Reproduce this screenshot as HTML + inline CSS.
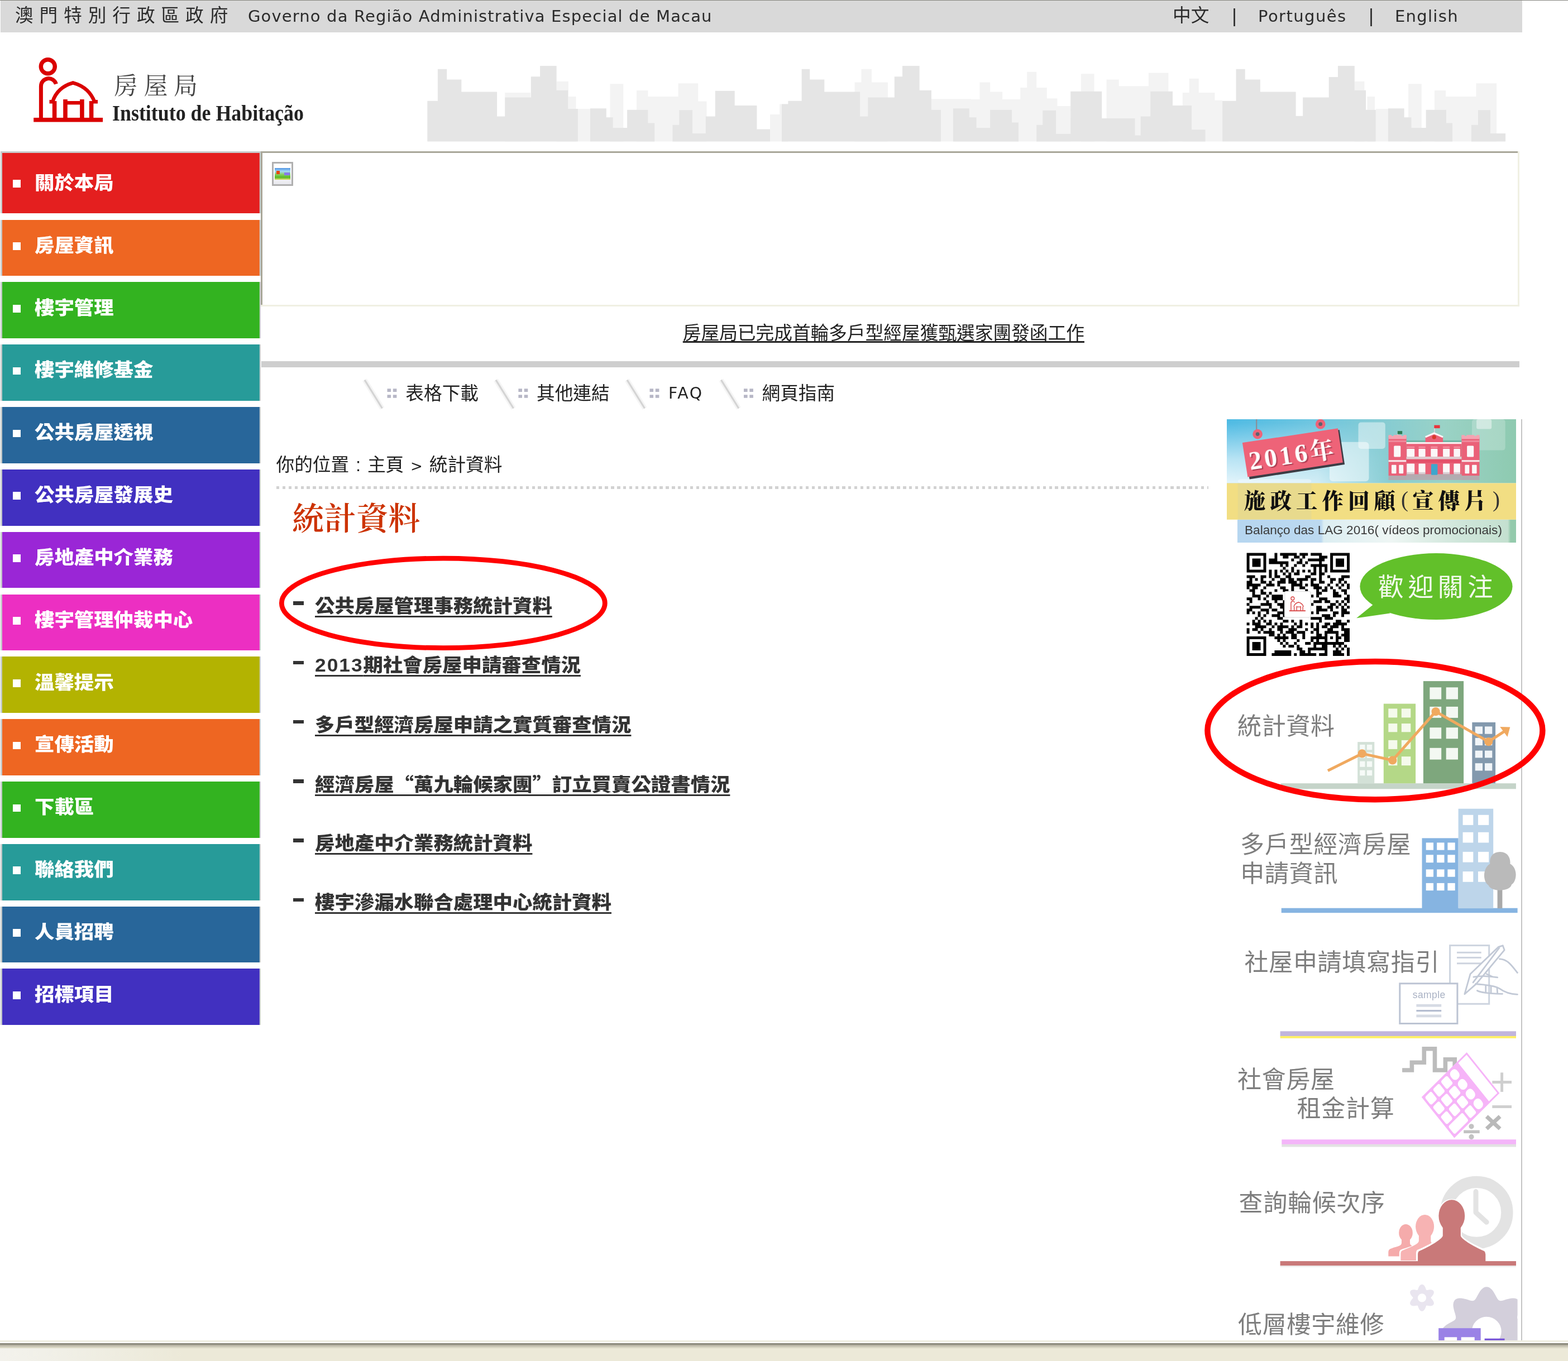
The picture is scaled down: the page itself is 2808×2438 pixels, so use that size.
<!DOCTYPE html>
<html lang="zh-Hant">
<head>
<meta charset="utf-8">
<title>房屋局 - 統計資料</title>
<style>
html,body{margin:0;padding:0;background:#fff;}
body{width:2808px;height:2438px;position:relative;overflow:hidden;
  font-family:"Liberation Sans","Noto Sans CJK TC",sans-serif;color:#333;}
.abs{position:absolute;white-space:nowrap;}
.tb,.mi span,#banner div{will-change:transform;}
.zh{font-family:"Liberation Sans","Noto Sans CJK TC",sans-serif;}
.vd{font-family:"DejaVu Sans","Noto Sans CJK TC",sans-serif;}
.ming{font-family:"Liberation Serif","Noto Serif CJK SC",serif;}
a{color:inherit;}
/* top bar */
#topline{left:0;top:0;width:2808px;height:1.4px;background:#85857e;}
#topbar{left:1.2px;top:1.2px;width:2724.6px;height:56.4px;background:#d9d9d9;}
.tb{top:8px;height:40px;line-height:40px;font-size:32.7px;color:#2b2b2b;}
.tl{font-size:29px;letter-spacing:1.14px;top:8.6px;}
/* sidebar */
#side{left:1.2px;top:271.1px;width:466.2px;}
.mi{position:absolute;left:0;width:466.1px;height:100.8px;background:linear-gradient(var(--c),var(--c)) 2.7px 0/460.8px 100% no-repeat,linear-gradient(90deg,#c6cbcb 0,#c6cbcb 50%,#cdd2d2 50%,#cdd2d2 100%);}
.mi i{position:absolute;left:21.6px;top:40.6px;width:13.8px;height:13.6px;background:#fff;}
.mi span{position:absolute;left:60.9px;top:20.2px;height:52px;line-height:52px;font-size:32.7px;font-weight:900;color:#fff;white-space:nowrap;transform:scaleX(1.083);transform-origin:0 50%;
  font-family:"Liberation Sans","Noto Sans CJK TC",sans-serif;}
/* content */
#box{left:467.3px;top:271.1px;width:2253.3px;height:277.8px;background:#fff;}
#box b{position:absolute;display:block;}
#hr{left:467.5px;top:647.2px;width:2253.3px;height:10.6px;background:#cecece;}
.t12{font-size:32.7px;line-height:40px;height:40px;color:#222;}
.lnk{text-decoration:underline;text-decoration-thickness:2.7px;text-underline-offset:3px;}
.li{left:563.8px;font-size:32.7px;font-weight:900;transform:scaleX(1.083);transform-origin:0 50%;line-height:44px;height:44px;color:#333;
  text-decoration:underline;text-decoration-thickness:2.7px;text-underline-offset:5.6px;text-decoration-skip-ink:none;}
.dash{left:524.7px;width:19.6px;height:6.4px;margin-top:-0.4px;background:#333;}
.rt{font-family:"Liberation Sans","Noto Sans CJK TC",sans-serif;color:#7e7e7e;font-size:43px;line-height:52px;letter-spacing:0.7px;margin-left:-0.8px;}
#vline{left:2723.6px;top:750.8px;width:2.6px;height:1650px;background:#c4c4c4;}
#status{left:0;top:2400.8px;width:2808px;height:37.2px;background:#ece9d8;}
</style>
</head>
<body>
<div id="wrap" style="position:absolute;left:0;top:0;width:2808px;height:2438px;opacity:0.9999;">
<div class="abs" id="topbar"></div>
<div class="abs" id="topline"></div>
<div class="abs tb zh" style="left:27px;letter-spacing:10.9px;">澳門特別行政區政府</div>
<div class="abs tb vd tl" style="left:444px;">Governo da Região Administrativa Especial de Macau</div>
<div class="abs tb vd" style="left:2099.5px;">中文</div>
<div class="abs tb vd" style="left:2205px;">|</div>
<div class="abs tb vd tl" style="left:2252.6px;letter-spacing:1.45px;">Português</div>
<div class="abs tb vd" style="left:2450px;">|</div>
<div class="abs tb vd tl" style="left:2497.5px;letter-spacing:1.3px;">English</div>

<!-- header / logo -->
<svg class="abs" id="sky" style="left:0;top:100px;" width="2808" height="160" viewBox="0 100 2808 160">
<path fill="#f3f3f3" d="M1092.5 253.6H1116.3V150.2H1092.5ZM1140.0 253.6H1160.4V162.1H1140.0ZM1160.4 253.6H1214.6V172.9H1160.4ZM1214.6 253.6H1250.2V149.2H1214.6ZM1250.2 253.6H1265.5V181.4H1250.2ZM1034.9 253.6H1056.9V195.0H1034.9ZM1379.1 253.6H1411.3V205.1H1379.1ZM1396.1 253.6H1411.3V186.5H1396.1ZM996.6 253.6H1017.9V145.8H996.6ZM904.3 253.6H950.1V166.1H904.3ZM1017.9 253.6H1031.5V172.9H1017.9ZM1172.2 253.6H1204.5V172.9H1172.2ZM1530.6 253.6H1589.9V147.5H1530.6ZM1542.4 253.6H1561.1V123.7H1542.4ZM1667.9 253.6H1739.1V177.3H1667.9ZM1754.4 253.6H1773.1V147.5H1754.4ZM1754.4 253.6H1795.1V164.4H1754.4ZM1739.1 253.6H1827.3V178.0H1739.1ZM1827.3 253.6H1874.8V157.0H1827.3ZM1839.2 253.6H1856.2V128.8H1839.2ZM1874.8 253.6H1893.5V176.3H1874.8ZM1893.5 253.6H1917.2V189.9H1893.5ZM1935.9 253.6H1959.6V132.2H1935.9ZM1981.6 253.6H2003.7V142.4H1981.6ZM1981.6 253.6H2059.6V154.3H1981.6ZM2057.9 253.6H2091.9V130.5H2057.9ZM1684.9 253.6H1706.9V196.7H1684.9ZM1823.9 253.6H1856.2V178.0H1823.9ZM2056.8 253.6H2092.4V130.5H2056.8ZM2117.8 253.6H2175.5V166.1H2117.8ZM2129.7 253.6H2146.7V140.7H2129.7ZM2158.5 253.6H2189.1V179.7H2158.5ZM2425.8 253.6H2443.4V145.8H2425.8ZM2448.5 253.6H2462.1V172.9H2448.5ZM2463.8 253.6H2485.8V195.0H2463.8ZM2522.1 253.6H2545.8V150.2H2522.1ZM2568.9 253.6H2589.2V162.1H2568.9ZM2589.2 253.6H2643.5V172.9H2589.2ZM2643.5 253.6H2680.1V149.2H2643.5ZM2601.1 253.6H2635.0V172.9H2601.1Z"/>
<path fill="#e5e5e5" d="M765.3 253.6H783.9V180.7H765.3ZM783.9 253.6H800.2V123.7H783.9ZM800.2 253.6H826.3V142.4H800.2ZM826.3 253.6H890.1V164.4H826.3ZM890.1 253.6H904.3V208.5H890.1ZM904.3 253.6H950.8V174.6H904.3ZM950.8 253.6H967.1V137.3H950.8ZM967.1 253.6H996.6V118.0H967.1ZM996.6 253.6H1017.2V161.7H996.6ZM1017.2 253.6H1034.9V195.0H1017.2ZM1056.9 253.6H1085.8V194.3H1056.9ZM1085.8 253.6H1097.6V210.2H1085.8ZM1097.6 253.6H1123.1V228.9H1097.6ZM1123.1 253.6H1160.4V196.7H1123.1ZM1160.4 253.6H1172.2V220.4H1160.4ZM1204.5 253.6H1216.3V223.8H1204.5ZM1216.3 253.6H1240.1V197.3H1216.3ZM1240.1 253.6H1263.8V239.1H1240.1ZM1263.8 253.6H1280.8V208.5H1263.8ZM1280.8 253.6H1315.7V162.7H1280.8ZM1315.7 253.6H1355.4V188.9H1315.7ZM1355.4 253.6H1379.1V231.6H1355.4ZM1411.3 253.6H1436.8V180.7H1411.3ZM1436.8 253.6H1450.0V123.7H1436.8ZM1400.0 253.6H1411.9V186.5H1400.0ZM1411.9 253.6H1435.6V180.7H1411.9ZM1435.6 253.6H1450.2V123.7H1435.6ZM1450.2 253.6H1476.3V142.4H1450.2ZM1476.3 253.6H1540.1V164.4H1476.3ZM1540.1 253.6H1554.3V208.5H1540.1ZM1554.3 253.6H1601.8V174.6H1554.3ZM1601.8 253.6H1616.0V137.3H1601.8ZM1616.0 253.6H1646.6V118.0H1616.0ZM1646.6 253.6H1667.9V161.7H1646.6ZM1667.9 253.6H1684.9V196.7H1667.9ZM1706.9 253.6H1735.8V194.3H1706.9ZM1735.8 253.6H1748.6V210.2H1735.8ZM1748.6 253.6H1773.1V228.9H1748.6ZM1773.1 253.6H1812.1V196.7H1773.1ZM1812.1 253.6H1823.9V219.4H1812.1ZM1856.2 253.6H1867.3V223.8H1856.2ZM1867.3 253.6H1891.1V197.7H1867.3ZM1891.1 253.6H1917.2V239.7H1891.1ZM1917.2 253.6H1973.2V163.8H1917.2ZM1973.2 253.6H2032.5V211.9H1973.2ZM2032.5 253.6H2042.7V242.4H2032.5ZM2042.7 253.6H2061.3V208.5H2042.7ZM2061.3 253.6H2100.0V163.8H2061.3ZM2050.0 253.6H2060.2V208.5H2050.0ZM2060.2 253.6H2094.1V163.8H2060.2ZM2094.1 253.6H2134.1V188.9H2094.1ZM2134.1 253.6H2158.5V232.3H2134.1ZM2189.1 253.6H2213.5V180.7H2189.1ZM2213.5 253.6H2229.7V123.7H2213.5ZM2229.7 253.6H2256.9V142.4H2229.7ZM2256.9 253.6H2320.6V164.4H2256.9ZM2320.6 253.6H2333.2V207.8H2320.6ZM2333.2 253.6H2379.7V174.6H2333.2ZM2379.7 253.6H2395.9V138.0H2379.7ZM2395.9 253.6H2425.8V118.0H2395.9ZM2425.8 253.6H2446.1V161.7H2425.8ZM2446.1 253.6H2463.8V196.7H2446.1ZM2485.8 253.6H2514.6V194.3H2485.8ZM2514.6 253.6H2527.5V210.2H2514.6ZM2527.5 253.6H2553.6V228.9H2527.5ZM2553.6 253.6H2589.9V196.7H2553.6ZM2589.9 253.6H2601.1V220.4H2589.9ZM2635.0 253.6H2646.9V223.8H2635.0ZM2646.9 253.6H2668.9V197.3H2646.9ZM2668.9 253.6H2696.1V239.1H2668.9Z"/>
</svg>
<svg class="abs" id="logo" style="left:40px;top:80px;" width="160" height="150" viewBox="40 80 160 150">
  <g fill="none" stroke="#da0000" stroke-width="6.6">
    <circle cx="85.8" cy="119.3" r="12.5" stroke-width="7.4"/>
    <path d="M73.4 212 V154.4 A13.8 13.8 0 0 1 100.4 150.4" stroke-width="7"/>
    <path d="M94.3 182 C99 167 109 154.5 130.7 148.3 C153 154.5 163 167 169.2 182" stroke-width="6.4"/>
    <path d="M88.5 182.2 H97 M166 182.2 H175" stroke-width="6.4"/>
    <path d="M97.6 181 V212 M163.6 181 V212" stroke-width="7.6"/>
    <path d="M117 178 V212 M146.9 178 V212" stroke-width="7.6"/>
    <path d="M117 184.2 H147" stroke-width="6.4"/>
  </g>
  <rect x="60.2" y="210.9" width="123.9" height="7.6" fill="#da0000"/>
</svg>
<div class="abs ming" style="left:204px;top:127.3px;font-size:43px;line-height:56px;letter-spacing:10.5px;color:#444;">房屋局</div>
<div class="abs" style="left:200.6px;top:178.6px;font-family:'Liberation Serif',serif;font-weight:700;font-size:40px;line-height:48px;color:#222;transform:scaleX(0.897);transform-origin:0 0;">Instituto de Habitação</div>

<!-- sidebar -->
<div class="abs" id="side">
  <div class="mi" style="top:0;height:110.8px;--c:#e41f1f;background:linear-gradient(var(--c),var(--c)) 2.7px 2.6px/460.8px 108.2px no-repeat,#c8cccc;"><i style="top:51.4px"></i><span style="top:31.4px">關於本局</span></div>
  <div class="mi" style="top:122.5px;--c:#ee6622;"><i></i><span>房屋資訊</span></div>
  <div class="mi" style="top:234.3px;--c:#33b320;"><i></i><span>樓宇管理</span></div>
  <div class="mi" style="top:346.1px;--c:#279b99;"><i></i><span>樓宇維修基金</span></div>
  <div class="mi" style="top:458.0px;--c:#28669a;"><i></i><span>公共房屋透視</span></div>
  <div class="mi" style="top:569.8px;--c:#4130c0;"><i></i><span>公共房屋發展史</span></div>
  <div class="mi" style="top:681.6px;--c:#9a26d6;"><i></i><span>房地產中介業務</span></div>
  <div class="mi" style="top:793.5px;--c:#ec2fc2;"><i></i><span>樓宇管理仲裁中心</span></div>
  <div class="mi" style="top:905.3px;--c:#b3b300;"><i></i><span>溫馨提示</span></div>
  <div class="mi" style="top:1017.1px;--c:#ee6622;"><i></i><span>宣傳活動</span></div>
  <div class="mi" style="top:1128.9px;--c:#33b320;"><i></i><span>下載區</span></div>
  <div class="mi" style="top:1240.8px;--c:#279b99;"><i></i><span>聯絡我們</span></div>
  <div class="mi" style="top:1352.6px;--c:#28669a;"><i></i><span>人員招聘</span></div>
  <div class="mi" style="top:1464.4px;--c:#4130c0;"><i></i><span>招標項目</span></div>
</div>

<!-- banner box -->
<div class="abs" id="box"><b style="left:0;bottom:0;width:100%;height:2.7px;background:#f0f0e3;"></b><b style="right:0;top:0;width:2.6px;height:100%;background:#f0f0e3;"></b><b style="left:0;top:0;width:2250.7px;height:2.6px;background:#a9a799;"></b><b style="left:0;top:0;width:2.6px;height:275.1px;background:#a9a799;"></b></div>
<div class="abs" id="broken" style="left:487.1px;top:290px;width:37.7px;height:43.1px;background:#b0b0b0;">
  <div style="position:absolute;left:2.7px;top:2.7px;right:2.7px;bottom:2.7px;background:linear-gradient(#fff 45%,#e8e8ee 100%);"></div>
  <div style="position:absolute;left:5.1px;top:10.9px;width:27.5px;height:21.5px;background:linear-gradient(#4f93e2 0%,#a6d9f9 28%,#86d060 55%,#58b822 80%,#e6df72 100%);"></div>
  <div style="position:absolute;left:8px;top:16px;width:6px;height:5.6px;background:#e8480e;"></div>
  <div style="position:absolute;left:21.6px;top:19px;width:10.6px;height:5px;background:#8878ee;"></div>
</div>
<div class="abs t12 zh lnk" style="left:1222.8px;top:577px;">房屋局已完成首輪多戶型經屋獲甄選家團發函工作</div>
<div class="abs" id="hr"></div>

<!-- nav -->
<div id="nav">
  <svg class="abs" style="left:630px;top:670px;" width="760" height="70" viewBox="630 670 760 70"><path d="M653.0 680.6L684.5 731.5" stroke="#f5f5f5" stroke-width="9" fill="none"/><path d="M653.0 680.6L684.5 731.5" stroke="#d4d4d4" stroke-width="3.2" fill="none"/><path d="M888.0 680.6L919.5 731.5" stroke="#f5f5f5" stroke-width="9" fill="none"/><path d="M888.0 680.6L919.5 731.5" stroke="#d4d4d4" stroke-width="3.2" fill="none"/><path d="M1123.0 680.6L1154.5 731.5" stroke="#f5f5f5" stroke-width="9" fill="none"/><path d="M1123.0 680.6L1154.5 731.5" stroke="#d4d4d4" stroke-width="3.2" fill="none"/><path d="M1291.4 680.6L1322.9 731.5" stroke="#f5f5f5" stroke-width="9" fill="none"/><path d="M1291.4 680.6L1322.9 731.5" stroke="#d4d4d4" stroke-width="3.2" fill="none"/><path fill="#b7b7c6" d="M693.5 696.3h6.6v5.6h-6.6zM693.5 707.2h6.6v5.6h-6.6zM703.8 696.3h6.6v5.6h-6.6zM703.8 707.2h6.6v5.6h-6.6zM928.4 696.3h6.6v5.6h-6.6zM928.4 707.2h6.6v5.6h-6.6zM938.7 696.3h6.6v5.6h-6.6zM938.7 707.2h6.6v5.6h-6.6zM1163.5 696.3h6.6v5.6h-6.6zM1163.5 707.2h6.6v5.6h-6.6zM1173.8 696.3h6.6v5.6h-6.6zM1173.8 707.2h6.6v5.6h-6.6zM1332.0 696.3h6.6v5.6h-6.6zM1332.0 707.2h6.6v5.6h-6.6zM1342.3 696.3h6.6v5.6h-6.6zM1342.3 707.2h6.6v5.6h-6.6z"/></svg>
  <div class="abs t12 zh" style="left:726.3px;top:684.5px;">表格下載</div>
  <div class="abs t12 zh" style="left:961px;top:684.5px;">其他連結</div>
  <div class="abs t12 vd" style="left:1197px;top:684.5px;font-size:28.4px;letter-spacing:2.6px;">FAQ</div>
  <div class="abs t12 zh" style="left:1364.5px;top:684.5px;">網頁指南</div>
</div>

<!-- breadcrumb / title -->
<div class="abs t12 zh" style="left:494.5px;top:812.5px;">你的位置<span style="display:inline-block;width:32.7px;text-align:center;">:</span>主頁<span style="display:inline-block;width:45.4px;text-align:center;font-size:26px;font-family:'DejaVu Sans',sans-serif;">&gt;</span>統計資料</div>
<div class="abs" id="dots" style="left:495px;top:871px;width:1669px;height:5.4px;background:repeating-linear-gradient(90deg,#d2d2d2 0,#d2d2d2 5.45px,transparent 5.45px,transparent 10.894px);"></div>
<div class="abs ming" style="left:523px;top:894px;font-size:57.2px;line-height:72px;color:#cc3300;letter-spacing:0.3px;font-weight:600;">統計資料</div>

<!-- list -->
<div class="abs dash" style="top:1077.8px;"></div><div class="abs li zh" style="top:1064px;">公共房屋管理事務統計資料</div>
<div class="abs dash" style="top:1184.1px;"></div><div class="abs li zh" style="top:1170.3px;"><span style="letter-spacing:1.8px;">2013</span>期社會房屋申請審查情況</div>
<div class="abs dash" style="top:1290.3px;"></div><div class="abs li zh" style="top:1276.5px;">多戶型經濟房屋申請之實質審查情況</div>
<div class="abs dash" style="top:1396.6px;"></div><div class="abs li zh" style="top:1380.6px;font-family:'Noto Sans CJK TC',sans-serif;">經濟房屋“萬九輪候家團”訂立買賣公證書情況</div>
<div class="abs dash" style="top:1502.8px;"></div><div class="abs li zh" style="top:1489px;">房地產中介業務統計資料</div>
<div class="abs dash" style="top:1609.1px;"></div><div class="abs li zh" style="top:1595.3px;">樓宇滲漏水聯合處理中心統計資料</div>

<!-- right column placeholder -->
<div id="right">
<div class="abs" id="banner" style="left:2196.8px;top:750.9px;width:518.2px;height:221.1px;overflow:hidden;">
<svg width="518.2" height="221.1" viewBox="0 0 518.2 221.1" style="position:absolute;left:0;top:0;">
<defs><linearGradient id="bg1" x1="0" y1="0" x2="1" y2="0"><stop offset="0" stop-color="#4fbbe4"/><stop offset="0.3" stop-color="#6fc6e0"/><stop offset="0.55" stop-color="#86ccd2"/><stop offset="0.75" stop-color="#9ad2c6"/><stop offset="1" stop-color="#8ecab0"/></linearGradient><linearGradient id="bg2" x1="0" y1="0" x2="0" y2="1"><stop offset="0" stop-color="#fff" stop-opacity="0"/><stop offset="0.6" stop-color="#fff" stop-opacity="0.6"/><stop offset="1" stop-color="#fff" stop-opacity="0.85"/></linearGradient><linearGradient id="bg4" x1="0" y1="0" x2="1" y2="0"><stop offset="0" stop-color="#fff" stop-opacity="1"/><stop offset="0.55" stop-color="#fff" stop-opacity="0.8"/><stop offset="1" stop-color="#fff" stop-opacity="0"/></linearGradient><mask id="mk"><rect x="0" y="0" width="296" height="130" fill="url(#bg4)"/></mask><linearGradient id="bg3" x1="0" y1="0" x2="1" y2="0"><stop offset="0" stop-color="#b6d6f0"/><stop offset="0.3" stop-color="#bcd9f0"/><stop offset="0.31" stop-color="#dceef2"/><stop offset="0.55" stop-color="#eef6f4"/><stop offset="0.8" stop-color="#cfe6da"/><stop offset="0.97" stop-color="#c4e0d0"/><stop offset="0.98" stop-color="#94caac"/><stop offset="1" stop-color="#94caac"/></linearGradient></defs>
<rect x="0" y="0" width="518.2" height="114.5" fill="url(#bg1)"/>
<rect x="0" y="5.4" width="295.2" height="109.1" fill="url(#bg2)" mask="url(#mk)"/>
<rect x="235.5" y="5.4" width="48.3" height="47.5" rx="5" fill="#fff" fill-opacity="0.45"/>
<rect x="184.0" y="40.7" width="70.5" height="70.5" rx="6" fill="#fff" fill-opacity="0.50"/>
<rect x="439.0" y="0.0" width="59.7" height="55.6" rx="5" fill="#fff" fill-opacity="0.22"/>
<rect x="447.1" y="0.0" width="27.1" height="17.6" rx="3" fill="#fff" fill-opacity="0.45"/>
<rect x="19.8" y="107.2" width="131.6" height="7.3" rx="6" fill="#fff" fill-opacity="0.35"/>
<path d="M53.2 0V23.1 M167.7 0V4.9" stroke="#8a8f98" stroke-width="2.2" fill="none"/>
<polygon points="30.7,44.8 201.6,19.0 211.1,80.9 40.7,107.4" fill="#3c3c44"/>
<polygon points="27.9,42.1 198.9,16.3 207.8,77.6 37.4,103.6" fill="#ee6378"/>
<circle cx="55.1" cy="26.6" r="8.8" fill="#ee6378"/>
<circle cx="55.1" cy="26.6" r="3.4" fill="#5a6470"/>
<circle cx="167.7" cy="8.7" r="8.8" fill="#ee6378"/>
<circle cx="167.7" cy="8.7" r="3.4" fill="#5a6470"/>
<path d="M371.9 11.2V25.1 M306.1 21.5V30.0" stroke="#d8d8d8" stroke-width="1.6" fill="none"/>
<rect x="371.3" y="10.6" width="10.3" height="5.5" fill="#e8343c"/>
<rect x="305.7" y="21.1" width="8.5" height="5.6" fill="#2c7d52"/>
<rect x="289.6" y="32.4" width="32.1" height="69.0" fill="#ea6178"/>
<rect x="289.6" y="30.0" width="32.1" height="5.5" fill="#f4a4b2"/>
<rect x="289.6" y="28.2" width="5.5" height="4.2" fill="#f4a4b2"/>
<rect x="298.6" y="28.2" width="5.5" height="4.2" fill="#f4a4b2"/>
<rect x="302.9" y="28.2" width="5.5" height="4.2" fill="#f4a4b2"/>
<rect x="307.1" y="28.2" width="5.5" height="4.2" fill="#f4a4b2"/>
<rect x="316.2" y="28.2" width="5.5" height="4.2" fill="#f4a4b2"/>
<rect x="289.6" y="37.9" width="32.1" height="3.0" fill="#f08a9c"/>
<rect x="289.6" y="73.2" width="32.1" height="3.1" fill="#f8e8ea"/>
<rect x="289.6" y="101.4" width="32.1" height="7.3" fill="#b3abb0"/>
<rect x="420.4" y="32.4" width="32.1" height="69.0" fill="#ea6178"/>
<rect x="420.4" y="30.0" width="32.1" height="5.5" fill="#f4a4b2"/>
<rect x="420.4" y="28.2" width="5.5" height="4.2" fill="#f4a4b2"/>
<rect x="429.4" y="28.2" width="5.5" height="4.2" fill="#f4a4b2"/>
<rect x="433.7" y="28.2" width="5.5" height="4.2" fill="#f4a4b2"/>
<rect x="437.9" y="28.2" width="5.5" height="4.2" fill="#f4a4b2"/>
<rect x="447.0" y="28.2" width="5.5" height="4.2" fill="#f4a4b2"/>
<rect x="420.4" y="37.9" width="32.1" height="3.0" fill="#f08a9c"/>
<rect x="420.4" y="73.2" width="32.1" height="3.1" fill="#f8e8ea"/>
<rect x="420.4" y="101.4" width="32.1" height="7.3" fill="#b3abb0"/>
<rect x="321.6" y="40.9" width="98.7" height="58.7" fill="#ea6178"/>
<rect x="321.6" y="40.9" width="98.7" height="3.3" fill="#fbeef0"/>
<rect x="321.6" y="37.9" width="98.7" height="3.0" fill="#6fb7a6"/>
<polygon points="355.6,40.9 355.6,31.8 371.3,24.8 387.1,31.8 387.1,40.9" fill="#ea6178"/>
<path d="M355.6 31.8L371.3 25.0L387.1 31.8" fill="none" stroke="#fdf4f5" stroke-width="3"/>
<circle cx="371.3" cy="32.0" r="3.6" fill="#d83a2a"/>
<rect x="321.6" y="66.9" width="98.7" height="4.8" fill="#e0ccd0"/>
<rect x="321.6" y="71.8" width="98.7" height="6.1" fill="#e4506a"/>
<rect x="321.6" y="98.4" width="98.7" height="7.3" fill="#b3abb0"/>
<rect x="289.6" y="105.7" width="162.9" height="3.0" fill="#b3abb0"/>
<rect x="299.2" y="47.5" width="12.1" height="20.0" fill="#fbf7f8" rx="1.5"/>
<rect x="430.1" y="47.5" width="12.1" height="20.0" fill="#fbf7f8" rx="1.5"/>
<rect x="322.3" y="53.0" width="13.9" height="13.9" fill="#fbf7f8" rx="1.2"/>
<rect x="322.3" y="48.8" width="13.9" height="2.7" fill="#f28ea0"/>
<rect x="343.5" y="53.0" width="12.1" height="13.9" fill="#fbf7f8" rx="1.2"/>
<rect x="343.5" y="48.8" width="12.1" height="2.7" fill="#f28ea0"/>
<rect x="365.3" y="53.0" width="12.1" height="13.9" fill="#fbf7f8" rx="1.2"/>
<rect x="365.3" y="48.8" width="12.1" height="2.7" fill="#f28ea0"/>
<rect x="387.1" y="53.0" width="12.1" height="13.9" fill="#fbf7f8" rx="1.2"/>
<rect x="387.1" y="48.8" width="12.1" height="2.7" fill="#f28ea0"/>
<rect x="406.4" y="53.0" width="11.5" height="13.9" fill="#fbf7f8" rx="1.2"/>
<rect x="406.4" y="48.8" width="11.5" height="2.7" fill="#f28ea0"/>
<rect x="295.0" y="81.7" width="8.5" height="15.5" fill="#fbf7f8" rx="1.0"/>
<rect x="308.3" y="81.7" width="7.9" height="15.5" fill="#fbf7f8" rx="1.0"/>
<rect x="426.4" y="81.7" width="7.9" height="15.5" fill="#fbf7f8" rx="1.0"/>
<rect x="439.1" y="81.7" width="8.5" height="15.5" fill="#fbf7f8" rx="1.0"/>
<rect x="322.3" y="79.6" width="13.9" height="16.4" fill="#fbf7f8" rx="1.0"/>
<rect x="322.3" y="94.8" width="13.9" height="3.6" fill="#d8d0d4"/>
<rect x="343.5" y="79.6" width="12.1" height="16.4" fill="#fbf7f8" rx="1.0"/>
<rect x="343.5" y="94.8" width="12.1" height="3.6" fill="#d8d0d4"/>
<rect x="387.1" y="79.6" width="12.1" height="16.4" fill="#fbf7f8" rx="1.0"/>
<rect x="387.1" y="94.8" width="12.1" height="3.6" fill="#d8d0d4"/>
<rect x="406.4" y="79.6" width="11.5" height="16.4" fill="#fbf7f8" rx="1.0"/>
<rect x="406.4" y="94.8" width="11.5" height="3.6" fill="#d8d0d4"/>
<rect x="365.9" y="80.3" width="11.5" height="19.4" fill="#3ea6cc" rx="1.5"/>
<rect x="0" y="114.5" width="518.2" height="65.4" fill="#f2de83"/>
<rect x="19.8" y="114.5" width="131.6" height="65.4" fill="#d8d4a0" fill-opacity="0.35"/>
<rect x="0" y="179.9" width="518.2" height="41.2" fill="#fff"/>
<rect x="19.0" y="179.9" width="499.2" height="41.2" fill="url(#bg3)"/>
</svg>
<div class="abs" style="left:40.7px;top:51.5px;font-family:'Liberation Serif','Noto Serif CJK SC',serif;font-weight:700;font-size:46px;line-height:50px;color:#fff;letter-spacing:4.5px;transform:rotate(-8.6deg);transform-origin:0 50%;text-shadow:2px 2px 1px rgba(120,30,50,0.6);">2016<span style="font-size:43px;letter-spacing:0;">年</span></div>
<div class="abs" style="left:31.5px;top:122.3px;font-family:'Liberation Serif','Noto Serif CJK SC',serif;font-weight:900;font-size:38.5px;line-height:50px;color:#111;letter-spacing:8px;">施政工作回顧</div>
<div class="abs" style="left:332.6px;top:122.3px;font-family:'Liberation Serif','Noto Serif CJK SC',serif;font-weight:900;font-size:38.5px;line-height:50px;color:#111;letter-spacing:8px;">宣傳片</div>
<div class="abs" style="left:312.6px;top:119.6px;font-family:'Liberation Serif',serif;font-weight:400;font-size:39px;line-height:50px;color:#333;">(</div>
<div class="abs" style="left:476.4px;top:119.6px;font-family:'Liberation Serif',serif;font-weight:400;font-size:39px;line-height:50px;color:#333;">)</div>
<div class="abs" style="left:32.0px;top:184.9px;font-family:'Liberation Sans',sans-serif;font-size:22.6px;line-height:28px;color:#3a3a3a;">Balanço das LAG 2016( vídeos promocionais)</div>
</div>
<svg class="abs" id="rsvg" style="left:2150px;top:960px;" width="658" height="1442" viewBox="2150 960 658 1442">
<defs><clipPath id="clipR"><rect x="2150" y="960" width="567.6" height="1442"/></clipPath></defs>
<path fill="#000" d="M2232.60 990.60h34.89v4.98h-34.89zM2282.44 990.60h4.98v4.98h-4.98zM2292.41 990.60h29.90v4.98h-29.90zM2327.29 990.60h14.95v4.98h-14.95zM2347.23 990.60h19.94v4.98h-19.94zM2382.11 990.60h34.89v4.98h-34.89zM2232.60 995.58h4.98v4.98h-4.98zM2262.50 995.58h4.98v4.98h-4.98zM2282.44 995.58h4.98v4.98h-4.98zM2297.39 995.58h9.97v4.98h-9.97zM2317.32 995.58h9.97v4.98h-9.97zM2332.28 995.58h4.98v4.98h-4.98zM2362.18 995.58h14.95v4.98h-14.95zM2382.11 995.58h4.98v4.98h-4.98zM2412.02 995.58h4.98v4.98h-4.98zM2232.60 1000.57h4.98v4.98h-4.98zM2242.57 1000.57h14.95v4.98h-14.95zM2262.50 1000.57h4.98v4.98h-4.98zM2272.47 1000.57h14.95v4.98h-14.95zM2312.34 1000.57h4.98v4.98h-4.98zM2327.29 1000.57h4.98v4.98h-4.98zM2342.24 1000.57h29.90v4.98h-29.90zM2382.11 1000.57h4.98v4.98h-4.98zM2392.08 1000.57h14.95v4.98h-14.95zM2412.02 1000.57h4.98v4.98h-4.98zM2232.60 1005.55h4.98v4.98h-4.98zM2242.57 1005.55h14.95v4.98h-14.95zM2262.50 1005.55h4.98v4.98h-4.98zM2272.47 1005.55h34.89v4.98h-34.89zM2322.31 1005.55h9.97v4.98h-9.97zM2337.26 1005.55h4.98v4.98h-4.98zM2362.18 1005.55h4.98v4.98h-4.98zM2382.11 1005.55h4.98v4.98h-4.98zM2392.08 1005.55h14.95v4.98h-14.95zM2412.02 1005.55h4.98v4.98h-4.98zM2232.60 1010.54h4.98v4.98h-4.98zM2242.57 1010.54h14.95v4.98h-14.95zM2262.50 1010.54h4.98v4.98h-4.98zM2292.41 1010.54h4.98v4.98h-4.98zM2302.37 1010.54h4.98v4.98h-4.98zM2317.32 1010.54h4.98v4.98h-4.98zM2332.28 1010.54h4.98v4.98h-4.98zM2347.23 1010.54h29.90v4.98h-29.90zM2382.11 1010.54h4.98v4.98h-4.98zM2392.08 1010.54h14.95v4.98h-14.95zM2412.02 1010.54h4.98v4.98h-4.98zM2232.60 1015.52h4.98v4.98h-4.98zM2262.50 1015.52h4.98v4.98h-4.98zM2297.39 1015.52h4.98v4.98h-4.98zM2312.34 1015.52h4.98v4.98h-4.98zM2352.21 1015.52h4.98v4.98h-4.98zM2362.18 1015.52h4.98v4.98h-4.98zM2372.15 1015.52h4.98v4.98h-4.98zM2382.11 1015.52h4.98v4.98h-4.98zM2412.02 1015.52h4.98v4.98h-4.98zM2232.60 1020.50h34.89v4.98h-34.89zM2272.47 1020.50h4.98v4.98h-4.98zM2282.44 1020.50h4.98v4.98h-4.98zM2292.41 1020.50h4.98v4.98h-4.98zM2302.37 1020.50h4.98v4.98h-4.98zM2312.34 1020.50h4.98v4.98h-4.98zM2322.31 1020.50h4.98v4.98h-4.98zM2332.28 1020.50h4.98v4.98h-4.98zM2342.24 1020.50h4.98v4.98h-4.98zM2352.21 1020.50h4.98v4.98h-4.98zM2362.18 1020.50h4.98v4.98h-4.98zM2372.15 1020.50h4.98v4.98h-4.98zM2382.11 1020.50h34.89v4.98h-34.89zM2272.47 1025.49h4.98v4.98h-4.98zM2282.44 1025.49h4.98v4.98h-4.98zM2297.39 1025.49h4.98v4.98h-4.98zM2307.36 1025.49h4.98v4.98h-4.98zM2317.32 1025.49h9.97v4.98h-9.97zM2347.23 1025.49h9.97v4.98h-9.97zM2362.18 1025.49h9.97v4.98h-9.97zM2232.60 1030.47h14.95v4.98h-14.95zM2257.52 1030.47h9.97v4.98h-9.97zM2272.47 1030.47h4.98v4.98h-4.98zM2282.44 1030.47h9.97v4.98h-9.97zM2302.37 1030.47h9.97v4.98h-9.97zM2337.26 1030.47h9.97v4.98h-9.97zM2362.18 1030.47h4.98v4.98h-4.98zM2377.13 1030.47h4.98v4.98h-4.98zM2402.05 1030.47h14.95v4.98h-14.95zM2237.58 1035.45h4.98v4.98h-4.98zM2247.55 1035.45h4.98v4.98h-4.98zM2257.52 1035.45h4.98v4.98h-4.98zM2277.45 1035.45h4.98v4.98h-4.98zM2292.41 1035.45h9.97v4.98h-9.97zM2307.36 1035.45h9.97v4.98h-9.97zM2322.31 1035.45h19.94v4.98h-19.94zM2347.23 1035.45h9.97v4.98h-9.97zM2362.18 1035.45h4.98v4.98h-4.98zM2382.11 1035.45h9.97v4.98h-9.97zM2397.06 1035.45h9.97v4.98h-9.97zM2232.60 1040.44h9.97v4.98h-9.97zM2257.52 1040.44h9.97v4.98h-9.97zM2272.47 1040.44h4.98v4.98h-4.98zM2287.42 1040.44h14.95v4.98h-14.95zM2307.36 1040.44h14.95v4.98h-14.95zM2327.29 1040.44h4.98v4.98h-4.98zM2347.23 1040.44h4.98v4.98h-4.98zM2362.18 1040.44h9.97v4.98h-9.97zM2382.11 1040.44h4.98v4.98h-4.98zM2397.06 1040.44h4.98v4.98h-4.98zM2407.03 1040.44h4.98v4.98h-4.98zM2232.60 1045.42h24.92v4.98h-24.92zM2267.49 1045.42h14.95v4.98h-14.95zM2287.42 1045.42h4.98v4.98h-4.98zM2312.34 1045.42h19.94v4.98h-19.94zM2337.26 1045.42h4.98v4.98h-4.98zM2347.23 1045.42h14.95v4.98h-14.95zM2377.13 1045.42h4.98v4.98h-4.98zM2392.08 1045.42h4.98v4.98h-4.98zM2402.05 1045.42h4.98v4.98h-4.98zM2412.02 1045.42h4.98v4.98h-4.98zM2232.60 1050.41h4.98v4.98h-4.98zM2242.57 1050.41h9.97v4.98h-9.97zM2262.50 1050.41h4.98v4.98h-4.98zM2292.41 1050.41h9.97v4.98h-9.97zM2312.34 1050.41h4.98v4.98h-4.98zM2327.29 1050.41h9.97v4.98h-9.97zM2352.21 1050.41h14.95v4.98h-14.95zM2372.15 1050.41h4.98v4.98h-4.98zM2382.11 1050.41h4.98v4.98h-4.98zM2397.06 1050.41h4.98v4.98h-4.98zM2412.02 1050.41h4.98v4.98h-4.98zM2237.58 1055.39h9.97v4.98h-9.97zM2257.52 1055.39h4.98v4.98h-4.98zM2282.44 1055.39h4.98v4.98h-4.98zM2297.39 1055.39h9.97v4.98h-9.97zM2312.34 1055.39h4.98v4.98h-4.98zM2337.26 1055.39h4.98v4.98h-4.98zM2357.19 1055.39h4.98v4.98h-4.98zM2367.16 1055.39h9.97v4.98h-9.97zM2387.10 1055.39h4.98v4.98h-4.98zM2402.05 1055.39h9.97v4.98h-9.97zM2242.57 1060.37h4.98v4.98h-4.98zM2257.52 1060.37h9.97v4.98h-9.97zM2272.47 1060.37h4.98v4.98h-4.98zM2357.19 1060.37h9.97v4.98h-9.97zM2387.10 1060.37h9.97v4.98h-9.97zM2407.03 1060.37h4.98v4.98h-4.98zM2242.57 1065.36h14.95v4.98h-14.95zM2267.49 1065.36h4.98v4.98h-4.98zM2277.45 1065.36h19.94v4.98h-19.94zM2347.23 1065.36h4.98v4.98h-4.98zM2357.19 1065.36h4.98v4.98h-4.98zM2387.10 1065.36h14.95v4.98h-14.95zM2412.02 1065.36h4.98v4.98h-4.98zM2232.60 1070.34h9.97v4.98h-9.97zM2252.54 1070.34h4.98v4.98h-4.98zM2262.50 1070.34h4.98v4.98h-4.98zM2277.45 1070.34h19.94v4.98h-19.94zM2362.18 1070.34h14.95v4.98h-14.95zM2407.03 1070.34h9.97v4.98h-9.97zM2237.58 1075.32h4.98v4.98h-4.98zM2267.49 1075.32h4.98v4.98h-4.98zM2282.44 1075.32h4.98v4.98h-4.98zM2297.39 1075.32h4.98v4.98h-4.98zM2352.21 1075.32h14.95v4.98h-14.95zM2372.15 1075.32h9.97v4.98h-9.97zM2392.08 1075.32h4.98v4.98h-4.98zM2402.05 1075.32h4.98v4.98h-4.98zM2412.02 1075.32h4.98v4.98h-4.98zM2232.60 1080.31h4.98v4.98h-4.98zM2257.52 1080.31h19.94v4.98h-19.94zM2287.42 1080.31h14.95v4.98h-14.95zM2347.23 1080.31h4.98v4.98h-4.98zM2382.11 1080.31h9.97v4.98h-9.97zM2397.06 1080.31h4.98v4.98h-4.98zM2407.03 1080.31h4.98v4.98h-4.98zM2237.58 1085.29h19.94v4.98h-19.94zM2272.47 1085.29h4.98v4.98h-4.98zM2292.41 1085.29h9.97v4.98h-9.97zM2357.19 1085.29h9.97v4.98h-9.97zM2377.13 1085.29h9.97v4.98h-9.97zM2392.08 1085.29h4.98v4.98h-4.98zM2402.05 1085.29h4.98v4.98h-4.98zM2412.02 1085.29h4.98v4.98h-4.98zM2232.60 1090.28h9.97v4.98h-9.97zM2257.52 1090.28h14.95v4.98h-14.95zM2277.45 1090.28h9.97v4.98h-9.97zM2297.39 1090.28h4.98v4.98h-4.98zM2357.19 1090.28h19.94v4.98h-19.94zM2382.11 1090.28h4.98v4.98h-4.98zM2402.05 1090.28h9.97v4.98h-9.97zM2232.60 1095.26h4.98v4.98h-4.98zM2242.57 1095.26h4.98v4.98h-4.98zM2252.54 1095.26h4.98v4.98h-4.98zM2267.49 1095.26h4.98v4.98h-4.98zM2287.42 1095.26h14.95v4.98h-14.95zM2347.23 1095.26h4.98v4.98h-4.98zM2357.19 1095.26h4.98v4.98h-4.98zM2387.10 1095.26h9.97v4.98h-9.97zM2402.05 1095.26h14.95v4.98h-14.95zM2252.54 1100.24h4.98v4.98h-4.98zM2262.50 1100.24h4.98v4.98h-4.98zM2277.45 1100.24h14.95v4.98h-14.95zM2297.39 1100.24h4.98v4.98h-4.98zM2367.16 1100.24h14.95v4.98h-14.95zM2387.10 1100.24h4.98v4.98h-4.98zM2402.05 1100.24h4.98v4.98h-4.98zM2247.55 1105.23h4.98v4.98h-4.98zM2257.52 1105.23h4.98v4.98h-4.98zM2287.42 1105.23h9.97v4.98h-9.97zM2347.23 1105.23h19.94v4.98h-19.94zM2372.15 1105.23h14.95v4.98h-14.95zM2242.57 1110.21h4.98v4.98h-4.98zM2252.54 1110.21h4.98v4.98h-4.98zM2262.50 1110.21h4.98v4.98h-4.98zM2272.47 1110.21h4.98v4.98h-4.98zM2297.39 1110.21h9.97v4.98h-9.97zM2312.34 1110.21h4.98v4.98h-4.98zM2327.29 1110.21h4.98v4.98h-4.98zM2362.18 1110.21h4.98v4.98h-4.98zM2392.08 1110.21h9.97v4.98h-9.97zM2412.02 1110.21h4.98v4.98h-4.98zM2232.60 1115.19h4.98v4.98h-4.98zM2242.57 1115.19h14.95v4.98h-14.95zM2267.49 1115.19h9.97v4.98h-9.97zM2282.44 1115.19h4.98v4.98h-4.98zM2292.41 1115.19h4.98v4.98h-4.98zM2317.32 1115.19h4.98v4.98h-4.98zM2327.29 1115.19h4.98v4.98h-4.98zM2337.26 1115.19h4.98v4.98h-4.98zM2347.23 1115.19h4.98v4.98h-4.98zM2357.19 1115.19h4.98v4.98h-4.98zM2372.15 1115.19h9.97v4.98h-9.97zM2387.10 1115.19h24.92v4.98h-24.92zM2247.55 1120.18h19.94v4.98h-19.94zM2277.45 1120.18h4.98v4.98h-4.98zM2287.42 1120.18h19.94v4.98h-19.94zM2312.34 1120.18h4.98v4.98h-4.98zM2322.31 1120.18h9.97v4.98h-9.97zM2347.23 1120.18h4.98v4.98h-4.98zM2357.19 1120.18h4.98v4.98h-4.98zM2367.16 1120.18h9.97v4.98h-9.97zM2382.11 1120.18h14.95v4.98h-14.95zM2402.05 1120.18h4.98v4.98h-4.98zM2232.60 1125.16h4.98v4.98h-4.98zM2242.57 1125.16h9.97v4.98h-9.97zM2257.52 1125.16h4.98v4.98h-4.98zM2272.47 1125.16h4.98v4.98h-4.98zM2287.42 1125.16h9.97v4.98h-9.97zM2307.36 1125.16h14.95v4.98h-14.95zM2337.26 1125.16h4.98v4.98h-4.98zM2352.21 1125.16h9.97v4.98h-9.97zM2377.13 1125.16h9.97v4.98h-9.97zM2402.05 1125.16h14.95v4.98h-14.95zM2232.60 1130.15h4.98v4.98h-4.98zM2252.54 1130.15h4.98v4.98h-4.98zM2262.50 1130.15h19.94v4.98h-19.94zM2292.41 1130.15h4.98v4.98h-4.98zM2302.37 1130.15h14.95v4.98h-14.95zM2322.31 1130.15h14.95v4.98h-14.95zM2347.23 1130.15h4.98v4.98h-4.98zM2357.19 1130.15h4.98v4.98h-4.98zM2372.15 1130.15h24.92v4.98h-24.92zM2407.03 1130.15h9.97v4.98h-9.97zM2272.47 1135.13h9.97v4.98h-9.97zM2287.42 1135.13h4.98v4.98h-4.98zM2297.39 1135.13h4.98v4.98h-4.98zM2312.34 1135.13h9.97v4.98h-9.97zM2332.28 1135.13h4.98v4.98h-4.98zM2357.19 1135.13h9.97v4.98h-9.97zM2372.15 1135.13h4.98v4.98h-4.98zM2392.08 1135.13h4.98v4.98h-4.98zM2402.05 1135.13h14.95v4.98h-14.95zM2232.60 1140.11h34.89v4.98h-34.89zM2282.44 1140.11h24.92v4.98h-24.92zM2312.34 1140.11h9.97v4.98h-9.97zM2332.28 1140.11h4.98v4.98h-4.98zM2347.23 1140.11h29.90v4.98h-29.90zM2382.11 1140.11h4.98v4.98h-4.98zM2392.08 1140.11h9.97v4.98h-9.97zM2407.03 1140.11h9.97v4.98h-9.97zM2232.60 1145.10h4.98v4.98h-4.98zM2262.50 1145.10h4.98v4.98h-4.98zM2287.42 1145.10h4.98v4.98h-4.98zM2297.39 1145.10h4.98v4.98h-4.98zM2322.31 1145.10h4.98v4.98h-4.98zM2347.23 1145.10h4.98v4.98h-4.98zM2357.19 1145.10h4.98v4.98h-4.98zM2372.15 1145.10h4.98v4.98h-4.98zM2392.08 1145.10h4.98v4.98h-4.98zM2407.03 1145.10h9.97v4.98h-9.97zM2232.60 1150.08h4.98v4.98h-4.98zM2242.57 1150.08h14.95v4.98h-14.95zM2262.50 1150.08h4.98v4.98h-4.98zM2292.41 1150.08h4.98v4.98h-4.98zM2302.37 1150.08h4.98v4.98h-4.98zM2317.32 1150.08h4.98v4.98h-4.98zM2337.26 1150.08h9.97v4.98h-9.97zM2352.21 1150.08h54.82v4.98h-54.82zM2232.60 1155.06h4.98v4.98h-4.98zM2242.57 1155.06h14.95v4.98h-14.95zM2262.50 1155.06h4.98v4.98h-4.98zM2297.39 1155.06h4.98v4.98h-4.98zM2307.36 1155.06h9.97v4.98h-9.97zM2322.31 1155.06h4.98v4.98h-4.98zM2352.21 1155.06h4.98v4.98h-4.98zM2367.16 1155.06h9.97v4.98h-9.97zM2387.10 1155.06h4.98v4.98h-4.98zM2397.06 1155.06h4.98v4.98h-4.98zM2407.03 1155.06h4.98v4.98h-4.98zM2232.60 1160.05h4.98v4.98h-4.98zM2242.57 1160.05h14.95v4.98h-14.95zM2262.50 1160.05h4.98v4.98h-4.98zM2322.31 1160.05h9.97v4.98h-9.97zM2342.24 1160.05h34.89v4.98h-34.89zM2392.08 1160.05h4.98v4.98h-4.98zM2402.05 1160.05h4.98v4.98h-4.98zM2412.02 1160.05h4.98v4.98h-4.98zM2232.60 1165.03h4.98v4.98h-4.98zM2262.50 1165.03h4.98v4.98h-4.98zM2282.44 1165.03h29.90v4.98h-29.90zM2327.29 1165.03h9.97v4.98h-9.97zM2342.24 1165.03h4.98v4.98h-4.98zM2372.15 1165.03h4.98v4.98h-4.98zM2387.10 1165.03h14.95v4.98h-14.95zM2412.02 1165.03h4.98v4.98h-4.98zM2232.60 1170.02h34.89v4.98h-34.89zM2277.45 1170.02h34.89v4.98h-34.89zM2317.32 1170.02h4.98v4.98h-4.98zM2327.29 1170.02h29.90v4.98h-29.90zM2362.18 1170.02h14.95v4.98h-14.95zM2387.10 1170.02h19.94v4.98h-19.94zM2412.02 1170.02h4.98v4.98h-4.98z"/>
<rect x="2300.7" y="1059.4" width="46.6" height="46.6" rx="3" fill="#fff" stroke="#e6e6e6" stroke-width="1.5"/>
<g transform="translate(2308.8 1066.2) scale(0.235) translate(-60 -95)" fill="none" stroke="#d94848" stroke-width="6"><circle cx="85.8" cy="119.3" r="12.5"/><path d="M73.4 212 V154.4 A13.8 13.8 0 0 1 100.4 150.4"/><path d="M94.3 182 C99 167 109 154.5 130.7 148.3 C153 154.5 163 167 169.2 182"/><path d="M97.6 181 V212 M163.6 181 V212 M117 178 V212 M146.9 178 V212 M117 184.2 H147"/><path d="M60 214 H184" stroke-width="8"/></g>
<path fill="#62c02a" d="M2429.2 1107.3 L2461.9 1080.8 L2489.7 1098.5 Z"/>
<ellipse cx="2572.0" cy="1050.6" rx="136.6" ry="59.5" fill="#62c02a"/>
<rect x="2293.9" y="1403.2" width="421.0" height="10.1" fill="#c5d4c9"/>
<rect x="2431.2" y="1329.1" width="30.1" height="74.1" fill="#d3e1d7"/>
<rect x="2435.2" y="1333.9" width="9.3" height="9.3" fill="#f6faf7"/>
<rect x="2435.2" y="1347.8" width="9.3" height="10.1" fill="#f6faf7"/>
<rect x="2435.2" y="1363.7" width="9.3" height="10.1" fill="#f6faf7"/>
<rect x="2435.2" y="1379.7" width="9.3" height="9.6" fill="#f6faf7"/>
<rect x="2447.9" y="1333.9" width="9.3" height="9.3" fill="#f6faf7"/>
<rect x="2447.9" y="1347.8" width="9.3" height="10.1" fill="#f6faf7"/>
<rect x="2447.9" y="1363.7" width="9.3" height="10.1" fill="#f6faf7"/>
<rect x="2447.9" y="1379.7" width="9.3" height="9.6" fill="#f6faf7"/>
<rect x="2477.8" y="1260.6" width="57.3" height="142.6" fill="#b4d887"/>
<rect x="2486.3" y="1269.4" width="16.0" height="16.0" fill="#f5faec"/>
<rect x="2486.3" y="1296.1" width="16.0" height="15.2" fill="#f5faec"/>
<rect x="2486.3" y="1325.9" width="16.0" height="16.0" fill="#f5faec"/>
<rect x="2486.3" y="1355.2" width="16.0" height="16.0" fill="#f5faec"/>
<rect x="2509.8" y="1269.4" width="16.5" height="16.0" fill="#f5faec"/>
<rect x="2509.8" y="1296.1" width="16.5" height="15.2" fill="#f5faec"/>
<rect x="2509.8" y="1325.9" width="16.5" height="16.0" fill="#f5faec"/>
<rect x="2509.8" y="1355.2" width="16.5" height="16.0" fill="#f5faec"/>
<rect x="2548.9" y="1220.1" width="72.2" height="183.1" fill="#7ea77d"/>
<rect x="2560.4" y="1231.3" width="20.8" height="21.3" fill="#f3f8f2"/>
<rect x="2560.4" y="1265.9" width="20.8" height="20.0" fill="#f3f8f2"/>
<rect x="2560.4" y="1303.3" width="20.8" height="20.0" fill="#f3f8f2"/>
<rect x="2560.4" y="1339.8" width="20.8" height="20.8" fill="#f3f8f2"/>
<rect x="2589.7" y="1231.3" width="21.3" height="21.3" fill="#f3f8f2"/>
<rect x="2589.7" y="1265.9" width="21.3" height="20.0" fill="#f3f8f2"/>
<rect x="2589.7" y="1303.3" width="21.3" height="20.0" fill="#f3f8f2"/>
<rect x="2589.7" y="1339.8" width="21.3" height="20.8" fill="#f3f8f2"/>
<rect x="2636.3" y="1293.9" width="41.8" height="109.3" fill="#8399ad"/>
<rect x="2641.7" y="1301.4" width="13.3" height="13.3" fill="#f1f5f8"/>
<rect x="2641.7" y="1321.9" width="13.3" height="13.3" fill="#f1f5f8"/>
<rect x="2641.7" y="1344.6" width="13.3" height="12.8" fill="#f1f5f8"/>
<rect x="2641.7" y="1367.2" width="13.3" height="13.3" fill="#f1f5f8"/>
<rect x="2659.0" y="1301.4" width="13.3" height="13.3" fill="#f1f5f8"/>
<rect x="2659.0" y="1321.9" width="13.3" height="13.3" fill="#f1f5f8"/>
<rect x="2659.0" y="1344.6" width="13.3" height="12.8" fill="#f1f5f8"/>
<rect x="2659.0" y="1367.2" width="13.3" height="13.3" fill="#f1f5f8"/>
<polyline fill="none" stroke="#f0a95f" stroke-width="5" stroke-linejoin="round" points="2377.9,1380.5 2439.2,1349.9 2493.8,1361.9 2571.1,1274.7 2665.7,1328.6 2696.3,1308.6"/>
<circle cx="2439.2" cy="1349.9" r="7.6" fill="#f0a95f"/>
<circle cx="2493.8" cy="1361.9" r="7.6" fill="#f0a95f"/>
<circle cx="2571.1" cy="1274.7" r="7.6" fill="#f0a95f"/>
<circle cx="2665.7" cy="1328.6" r="7.6" fill="#f0a95f"/>
<path fill="#f0a95f" d="M2704.3 1302.5 L2686.2 1301.9 L2699.5 1320.0 Z"/>
<rect x="2294.7" y="1626.7" width="422.9" height="8.5" fill="#86b4e1"/>
<rect x="2611.6" y="1448.7" width="62.6" height="178.5" fill="#bdd5ea"/>
<rect x="2619.6" y="1459.8" width="18.7" height="18.1" fill="#fff"/>
<rect x="2619.6" y="1490.8" width="18.7" height="18.7" fill="#fff"/>
<rect x="2619.6" y="1525.9" width="18.7" height="18.7" fill="#fff"/>
<rect x="2619.6" y="1561.1" width="18.7" height="18.7" fill="#fff"/>
<rect x="2647.0" y="1459.8" width="19.2" height="18.1" fill="#fff"/>
<rect x="2647.0" y="1490.8" width="19.2" height="18.7" fill="#fff"/>
<rect x="2647.0" y="1525.9" width="19.2" height="18.7" fill="#fff"/>
<rect x="2647.0" y="1561.1" width="19.2" height="18.7" fill="#fff"/>
<rect x="2546.5" y="1501.4" width="65.0" height="127.1" fill="#86b4e1"/>
<rect x="2553.7" y="1509.4" width="13.3" height="13.3" fill="#fff"/>
<rect x="2553.7" y="1531.3" width="13.3" height="13.9" fill="#fff"/>
<rect x="2553.7" y="1557.4" width="13.3" height="13.3" fill="#fff"/>
<rect x="2553.7" y="1581.9" width="13.3" height="13.3" fill="#fff"/>
<rect x="2573.2" y="1509.4" width="13.3" height="13.3" fill="#fff"/>
<rect x="2573.2" y="1531.3" width="13.3" height="13.9" fill="#fff"/>
<rect x="2573.2" y="1557.4" width="13.3" height="13.3" fill="#fff"/>
<rect x="2573.2" y="1581.9" width="13.3" height="13.3" fill="#fff"/>
<rect x="2592.4" y="1509.4" width="13.3" height="13.3" fill="#fff"/>
<rect x="2592.4" y="1531.3" width="13.3" height="13.9" fill="#fff"/>
<rect x="2592.4" y="1557.4" width="13.3" height="13.3" fill="#fff"/>
<rect x="2592.4" y="1581.9" width="13.3" height="13.3" fill="#fff"/>
<rect x="2681.6" y="1589.9" width="8.8" height="37.3" fill="#a9a9a9"/>
<path fill="#bababa" d="M2686.2 1525.9C2703.0 1525.9 2705.6 1541.9 2704.3 1547.2C2719.0 1555.2 2716.3 1579.2 2707.0 1584.6C2704.3 1597.9 2669.7 1597.9 2665.7 1585.9C2655.0 1579.2 2655.0 1555.2 2668.3 1547.2C2667.0 1536.6 2672.3 1525.9 2686.2 1525.9Z"/>
<rect x="2292.6" y="1847.3" width="422.4" height="9.1" fill="#c1b5dc"/>
<rect x="2292.6" y="1855.9" width="422.4" height="4.0" fill="#fff066"/>
<rect x="2596.6" y="1693.6" width="70.1" height="104.7" fill="#fff" stroke="#cdd4df" stroke-width="3"/>
<rect x="2609.0" y="1704.8" width="43.7" height="3.0" fill="#cdd3de"/>
<rect x="2609.0" y="1713.9" width="43.7" height="3.0" fill="#cdd3de"/>
<rect x="2609.0" y="1724.3" width="43.7" height="3.0" fill="#cdd3de"/>
<g fill="none" stroke="#c2c9d6" stroke-width="2.8" stroke-linecap="round" stroke-linejoin="round"><path d="M2683.2 1696.4L2691.2 1693.8L2694.1 1701.8L2644.0 1762.1L2622.9 1780.7L2633.1 1744.7Z" fill="#fff"/><path d="M2684.7 1698.2L2638.1 1759.9"/><path d="M2685.4 1717.8C2699.9 1717.8 2707.9 1730.9 2717.4 1742.5"/><path d="M2638.9 1750.1C2652.7 1747.2 2667.2 1748.7 2681.7 1750.9"/><path d="M2662.1 1744.7L2672.3 1749.4"/><path d="M2642.5 1762.5C2652.7 1764.3 2674.5 1763.6 2685.4 1770.8C2693.4 1776.7 2703.5 1780.7 2717.4 1781.4"/><path d="M2645.4 1774.5C2652.7 1779.2 2674.5 1779.9 2690.5 1780.3"/><path d="M2660.7 1765.8L2660.7 1778.1M2670.1 1766.5L2670.1 1778.8M2681.0 1769.4L2681.7 1779.6"/></g>
<rect x="2506.8" y="1761.8" width="103.1" height="71.7" fill="#fff" stroke="#bcc4d3" stroke-width="3"/>
<rect x="2536.4" y="1798.8" width="44.8" height="4.8" fill="#d6dbe4"/>
<rect x="2536.4" y="1809.0" width="44.8" height="3.2" fill="#b4bdd0"/>
<rect x="2536.4" y="1817.5" width="44.8" height="4.8" fill="#d6dbe4"/>
<rect x="2295.3" y="2041.2" width="419.7" height="8.8" fill="#f4b5f9"/>
<rect x="2295.3" y="2049.7" width="419.7" height="4.8" fill="#e2e2e2"/>
<polyline fill="none" stroke="#bcbcbc" stroke-width="7.6" points="2511.1,1917.0 2528.4,1917.0 2528.4,1903.2 2550.3,1903.2 2550.3,1878.7 2569.5,1878.7 2569.5,1917.0 2588.4,1917.0 2588.4,1897.8 2605.2,1897.8 2605.2,1916.5"/>
<path d="M2672.3 1938.6L2707.0 1938.6" stroke="#cfcfcf" stroke-width="5.0" fill="none"/>
<path d="M2689.6 1921.3L2689.6 1955.9" stroke="#cfcfcf" stroke-width="5.0" fill="none"/>
<path d="M2672.3 1982.6L2707.0 1982.6" stroke="#cfcfcf" stroke-width="5.0" fill="none"/>
<path d="M2662.2 1999.9L2686.2 2022.0" stroke="#b9b9b9" stroke-width="7.0" fill="none"/>
<path d="M2686.2 1999.9L2662.2 2022.0" stroke="#b9b9b9" stroke-width="7.0" fill="none"/>
<path d="M2621.2 2027.3L2649.7 2027.3" stroke="#c2c2c2" stroke-width="5.5" fill="none"/>
<circle cx="2635.0" cy="2017.8" r="4.6" fill="#c2c2c2"/>
<circle cx="2635.0" cy="2036.4" r="4.6" fill="#c2c2c2"/>
<g transform="matrix(0.626 0.78 -0.71 0.704 2626.7 1885.1)"><rect x="0" y="0" width="93.7" height="114.0" fill="#f6b4f8"/><rect x="3" y="3" width="87.7" height="21" fill="#fff"/><rect x="4.2" y="34.0" width="18.2" height="15.8" rx="7.0" fill="#fff"/><rect x="26.6" y="34.0" width="18.2" height="15.8" rx="7.0" fill="#fff"/><rect x="49.0" y="34.0" width="18.2" height="15.8" rx="7.0" fill="#fff"/><rect x="71.3" y="34.0" width="18.2" height="15.8" rx="7.0" fill="#fff"/><rect x="4.2" y="54.0" width="18.2" height="15.8" rx="3.5" fill="#fff"/><rect x="26.6" y="54.0" width="18.2" height="15.8" rx="3.5" fill="#fff"/><rect x="49.0" y="54.0" width="18.2" height="15.8" rx="3.5" fill="#fff"/><rect x="71.3" y="54.0" width="18.2" height="15.8" rx="3.5" fill="#fff"/><rect x="4.2" y="74.0" width="18.2" height="15.8" rx="3.5" fill="#fff"/><rect x="26.6" y="74.0" width="18.2" height="15.8" rx="3.5" fill="#fff"/><rect x="49.0" y="74.0" width="18.2" height="15.8" rx="3.5" fill="#fff"/><rect x="71.3" y="74.0" width="18.2" height="35.8" rx="3.5" fill="#fff"/><rect x="4.2" y="94.0" width="18.2" height="15.8" rx="3.5" fill="#fff"/><rect x="26.6" y="94.0" width="18.2" height="15.8" rx="3.5" fill="#fff"/><rect x="49.0" y="94.0" width="18.2" height="15.8" rx="3.5" fill="#fff"/></g>
<circle cx="2644.3" cy="2171.9" r="54.6" fill="none" stroke="#e3e3e3" stroke-width="21.3"/>
<path d="M2643.0 2134.6 V2171.9 L2662.2 2189.3" fill="none" stroke="#e3e3e3" stroke-width="9" stroke-linecap="round" stroke-linejoin="round"/>
<ellipse cx="2517.5" cy="2208.4" rx="12.3" ry="15.5" fill="#f5abab"/>
<path fill="#f5abab" d="M2510.0 2217.7L2510.0 2226.0C2510.0 2232.7 2502.3 2231.9 2489.5 2237.2Q2486.3 2238.6 2486.3 2243.3L2486.3 2250.5L2547.1 2250.5L2547.1 2243.3Q2547.1 2238.6 2543.9 2237.2C2531.1 2231.9 2525.0 2232.7 2525.0 2226.0L2525.0 2217.7Z"/>
<ellipse cx="2551.6" cy="2197.2" rx="17.6" ry="22.4" fill="#fff"/>
<path fill="#fff" d="M2540.4 2210.7L2540.4 2223.9C2540.4 2230.6 2521.8 2233.2 2509.0 2238.6Q2505.8 2239.9 2505.8 2244.7L2505.8 2258.0L2592.4 2258.0L2592.4 2244.7Q2592.4 2239.9 2589.2 2238.6C2576.4 2233.2 2562.8 2230.6 2562.8 2223.9L2562.8 2210.7Z"/>
<ellipse cx="2551.6" cy="2197.2" rx="16.5" ry="21.3" fill="#f7b3b3"/>
<path fill="#f7b3b3" d="M2540.9 2210.0L2540.9 2222.6C2540.9 2229.2 2524.4 2234.6 2511.6 2239.9Q2508.4 2241.2 2508.4 2246.0L2508.4 2258.0L2589.7 2258.0L2589.7 2246.0Q2589.7 2241.2 2586.5 2239.9C2573.7 2234.6 2562.3 2229.2 2562.3 2222.6L2562.3 2210.0Z"/>
<ellipse cx="2599.8" cy="2178.1" rx="25.6" ry="30.4" fill="#fff"/>
<path fill="#fff" d="M2581.7 2196.3L2581.7 2211.9C2581.7 2218.6 2551.9 2233.2 2539.1 2238.6Q2535.9 2239.9 2535.9 2244.7L2535.9 2266.5L2663.5 2266.5L2663.5 2244.7Q2663.5 2239.9 2660.3 2238.6C2647.5 2233.2 2618.0 2218.6 2618.0 2211.9L2618.0 2196.3Z"/>
<ellipse cx="2599.8" cy="2178.1" rx="23.4" ry="28.8" fill="#c97979"/>
<path fill="#c97979" d="M2583.8 2195.3L2583.8 2213.2C2583.8 2219.9 2555.1 2235.4 2542.3 2240.7Q2539.1 2242.0 2539.1 2246.8L2539.1 2266.5L2660.3 2266.5L2660.3 2246.8Q2660.3 2242.0 2657.1 2240.7C2644.3 2235.4 2615.8 2219.9 2615.8 2213.2L2615.8 2195.3Z"/>
<rect x="2292.6" y="2259.1" width="422.4" height="8.3" fill="#c97979"/>
<rect x="2292.6" y="2267.3" width="422.4" height="2.4" fill="#ededed"/>
<g clip-path="url(#clipR)">
<path fill="#d3cfdb" fill-rule="evenodd" d="M2742.2 2385.2L2741.8 2387.8L2740.8 2390.3L2739.0 2392.8L2736.8 2395.0L2734.1 2397.1L2731.2 2398.9L2728.2 2400.6L2725.3 2402.1L2722.7 2403.6L2720.5 2405.0L2718.7 2406.5L2717.6 2408.2L2717.2 2410.1L2717.4 2412.4L2718.0 2415.0L2718.8 2417.9L2719.8 2421.0L2720.7 2424.3L2721.4 2427.7L2721.9 2431.0L2721.9 2434.2L2721.4 2437.1L2720.4 2439.7L2718.8 2441.8L2716.7 2443.4L2714.1 2444.4L2711.2 2444.9L2708.0 2444.9L2704.7 2444.4L2701.3 2443.7L2698.0 2442.8L2694.9 2441.8L2692.0 2441.0L2689.4 2440.4L2687.1 2440.2L2685.2 2440.6L2683.5 2441.7L2682.0 2443.5L2680.6 2445.7L2679.1 2448.3L2677.6 2451.2L2675.9 2454.2L2674.1 2457.1L2672.0 2459.8L2669.8 2462.0L2667.3 2463.8L2664.8 2464.8L2662.2 2465.2L2659.6 2464.8L2657.1 2463.8L2654.6 2462.0L2652.4 2459.8L2650.3 2457.1L2648.5 2454.2L2646.8 2451.2L2645.3 2448.3L2643.8 2445.7L2642.4 2443.5L2640.9 2441.7L2639.2 2440.6L2637.3 2440.2L2635.0 2440.4L2632.4 2441.0L2629.5 2441.8L2626.4 2442.8L2623.1 2443.7L2619.7 2444.4L2616.4 2444.9L2613.2 2444.9L2610.3 2444.4L2607.7 2443.4L2605.6 2441.8L2604.0 2439.7L2603.0 2437.1L2602.5 2434.2L2602.5 2431.0L2603.0 2427.7L2603.7 2424.3L2604.6 2421.0L2605.6 2417.9L2606.4 2415.0L2607.0 2412.4L2607.2 2410.1L2606.8 2408.2L2605.7 2406.5L2603.9 2405.0L2601.7 2403.6L2599.1 2402.1L2596.2 2400.6L2593.2 2398.9L2590.3 2397.1L2587.6 2395.0L2585.4 2392.8L2583.6 2390.3L2582.6 2387.8L2582.2 2385.2L2582.6 2382.6L2583.6 2380.1L2585.4 2377.6L2587.6 2375.4L2590.3 2373.3L2593.2 2371.5L2596.2 2369.8L2599.1 2368.3L2601.7 2366.8L2603.9 2365.4L2605.7 2363.9L2606.8 2362.2L2607.2 2360.3L2607.0 2358.0L2606.4 2355.4L2605.6 2352.5L2604.6 2349.4L2603.7 2346.1L2603.0 2342.7L2602.5 2339.4L2602.5 2336.2L2603.0 2333.3L2604.0 2330.7L2605.6 2328.6L2607.7 2327.0L2610.3 2326.0L2613.2 2325.5L2616.4 2325.5L2619.7 2326.0L2623.1 2326.7L2626.4 2327.6L2629.5 2328.6L2632.4 2329.4L2635.0 2330.0L2637.3 2330.2L2639.2 2329.8L2640.9 2328.7L2642.4 2326.9L2643.8 2324.7L2645.3 2322.1L2646.8 2319.2L2648.5 2316.2L2650.3 2313.3L2652.4 2310.6L2654.6 2308.4L2657.1 2306.6L2659.6 2305.6L2662.2 2305.2L2664.8 2305.6L2667.3 2306.6L2669.8 2308.4L2672.0 2310.6L2674.1 2313.3L2675.9 2316.2L2677.6 2319.2L2679.1 2322.1L2680.6 2324.7L2682.0 2326.9L2683.5 2328.7L2685.2 2329.8L2687.1 2330.2L2689.4 2330.0L2692.0 2329.4L2694.9 2328.6L2698.0 2327.6L2701.3 2326.7L2704.7 2326.0L2708.0 2325.5L2711.2 2325.5L2714.1 2326.0L2716.7 2327.0L2718.8 2328.6L2720.4 2330.7L2721.4 2333.3L2721.9 2336.2L2721.9 2339.4L2721.4 2342.7L2720.7 2346.1L2719.8 2349.4L2718.8 2352.5L2718.0 2355.4L2717.4 2358.0L2717.2 2360.3L2717.6 2362.2L2718.7 2363.9L2720.5 2365.4L2722.7 2366.8L2725.3 2368.3L2728.2 2369.8L2731.2 2371.5L2734.1 2373.3L2736.8 2375.4L2739.0 2377.6L2740.8 2380.1L2741.8 2382.6ZM2635.7 2385.2 a26.5 26.5 0 1 0 53.0 0 a26.5 26.5 0 1 0 -53.0 0Z"/>
</g>
<path fill="#e9e5ef" fill-rule="evenodd" d="M2562.5 2324.8L2562.8 2325.5L2563.4 2326.3L2564.1 2327.1L2564.9 2328.0L2565.7 2329.0L2566.4 2330.1L2567.0 2331.3L2567.5 2332.4L2567.8 2333.6L2567.9 2334.8L2567.7 2335.8L2567.3 2336.8L2566.6 2337.6L2565.8 2338.3L2564.8 2338.8L2563.6 2339.2L2562.4 2339.3L2561.1 2339.4L2559.8 2339.3L2558.5 2339.1L2557.3 2338.9L2556.2 2338.7L2555.3 2338.6L2554.5 2338.7L2554.0 2339.3L2553.7 2340.1L2553.3 2341.2L2552.9 2342.3L2552.4 2343.5L2551.8 2344.7L2551.2 2345.8L2550.4 2346.8L2549.5 2347.7L2548.6 2348.3L2547.5 2348.7L2546.5 2348.8L2545.5 2348.7L2544.4 2348.3L2543.5 2347.7L2542.6 2346.8L2541.8 2345.8L2541.2 2344.7L2540.6 2343.5L2540.1 2342.3L2539.7 2341.2L2539.3 2340.1L2539.0 2339.3L2538.5 2338.7L2537.7 2338.6L2536.8 2338.7L2535.7 2338.9L2534.5 2339.1L2533.2 2339.3L2531.9 2339.4L2530.6 2339.3L2529.4 2339.2L2528.2 2338.8L2527.2 2338.3L2526.4 2337.6L2525.7 2336.8L2525.3 2335.8L2525.1 2334.8L2525.2 2333.6L2525.5 2332.4L2526.0 2331.3L2526.6 2330.1L2527.3 2329.0L2528.1 2328.0L2528.9 2327.1L2529.6 2326.3L2530.2 2325.5L2530.5 2324.8L2530.2 2324.1L2529.6 2323.3L2528.9 2322.5L2528.1 2321.6L2527.3 2320.6L2526.6 2319.5L2526.0 2318.3L2525.5 2317.2L2525.2 2316.0L2525.1 2314.8L2525.3 2313.8L2525.7 2312.8L2526.4 2312.0L2527.2 2311.3L2528.2 2310.8L2529.4 2310.4L2530.6 2310.3L2531.9 2310.2L2533.2 2310.3L2534.5 2310.5L2535.7 2310.7L2536.8 2310.9L2537.7 2311.0L2538.5 2310.9L2539.0 2310.3L2539.3 2309.5L2539.7 2308.4L2540.1 2307.3L2540.6 2306.1L2541.2 2304.9L2541.8 2303.8L2542.6 2302.8L2543.5 2301.9L2544.4 2301.3L2545.5 2300.9L2546.5 2300.8L2547.5 2300.9L2548.6 2301.3L2549.5 2301.9L2550.4 2302.8L2551.2 2303.8L2551.8 2304.9L2552.4 2306.1L2552.9 2307.3L2553.3 2308.4L2553.7 2309.5L2554.0 2310.3L2554.5 2310.9L2555.3 2311.0L2556.2 2310.9L2557.3 2310.7L2558.5 2310.5L2559.8 2310.3L2561.1 2310.2L2562.4 2310.3L2563.6 2310.4L2564.8 2310.8L2565.8 2311.3L2566.6 2312.0L2567.3 2312.8L2567.7 2313.8L2567.9 2314.8L2567.8 2316.0L2567.5 2317.2L2567.0 2318.3L2566.4 2319.5L2565.7 2320.6L2564.9 2321.6L2564.1 2322.5L2563.4 2323.3L2562.8 2324.1ZM2538.9 2324.8 a7.6 7.6 0 1 0 15.2 0 a7.6 7.6 0 1 0 -15.2 0Z"/>
<rect x="2576.2" y="2379.2" width="75.5" height="23.1" fill="#9a82e6"/>
<rect x="2586.7" y="2395.3" width="22.5" height="6.9" fill="#fff"/>
<rect x="2616.7" y="2395.3" width="24.0" height="6.9" fill="#fff"/>
<rect x="2658.6" y="2397.7" width="35.9" height="4.5" fill="#7a58d8"/>
</svg>
<div class="abs zh" style="left:2468.0px;top:1024.6px;font-size:45.5px;line-height:56px;letter-spacing:7.9px;color:#f4faee;font-weight:400;">歡迎關注</div>
<div class="abs rt" style="left:2216.8px;top:1275.3px;">統計資料</div>
<div class="abs rt" style="left:2222.1px;top:1486.5px;">多戶型經濟房屋</div>
<div class="abs rt" style="left:2222.1px;top:1538.7px;">申請資訊</div>
<div class="abs" style="left:2529.8px;top:1771.2px;font-family:'Liberation Sans',sans-serif;font-size:17.5px;line-height:22px;color:#aab2c4;letter-spacing:0.4px;">sample</div>
<div class="abs rt" style="left:2229.3px;top:1697.6px;">社屋申請填寫指引</div>
<div class="abs rt" style="left:2216.8px;top:1908.0px;">社會房屋</div>
<div class="abs rt" style="left:2323.4px;top:1960.2px;">租金計算</div>
<div class="abs rt" style="left:2219.4px;top:2128.8px;">查詢輪候次序</div>
<div class="abs rt" style="left:2217.9px;top:2346.9px;">低層樓宇維修</div>
</div><!--/right-->

<div class="abs" id="vline"></div>

<!-- red ellipses -->
<svg class="abs" style="left:0;top:0;pointer-events:none;" width="2808" height="2438" viewBox="0 0 2808 2438">
  <ellipse cx="793.8" cy="1080.4" rx="289.5" ry="80.3" fill="none" stroke="#ff0000" stroke-width="8.8"/>
  <ellipse cx="2462.4" cy="1308.6" rx="300" ry="123.6" fill="none" stroke="#ff0000" stroke-width="10.4"/>
</svg>

<div class="abs" id="status"><div style="position:absolute;left:0;top:0;width:100%;height:3.2px;background:#eeede0;"></div><div style="position:absolute;left:0;top:3.2px;width:100%;height:2.2px;background:#fff;"></div><div style="position:absolute;left:0;top:5.4px;width:100%;height:2.9px;background:#8c8a7c;"></div><div style="position:absolute;left:0;top:8.3px;width:100%;height:2.9px;background:#bcb8a8;"></div><div style="position:absolute;left:0;top:11.2px;width:100%;height:2.6px;background:#d8d5c3;"></div><div style="position:absolute;left:0;top:13.8px;width:330px;height:24px;background:linear-gradient(90deg,#f3f2ec 0,#f0efe6 35%,#ece9d8 100%);"></div></div>
</div>
</body>
</html>
